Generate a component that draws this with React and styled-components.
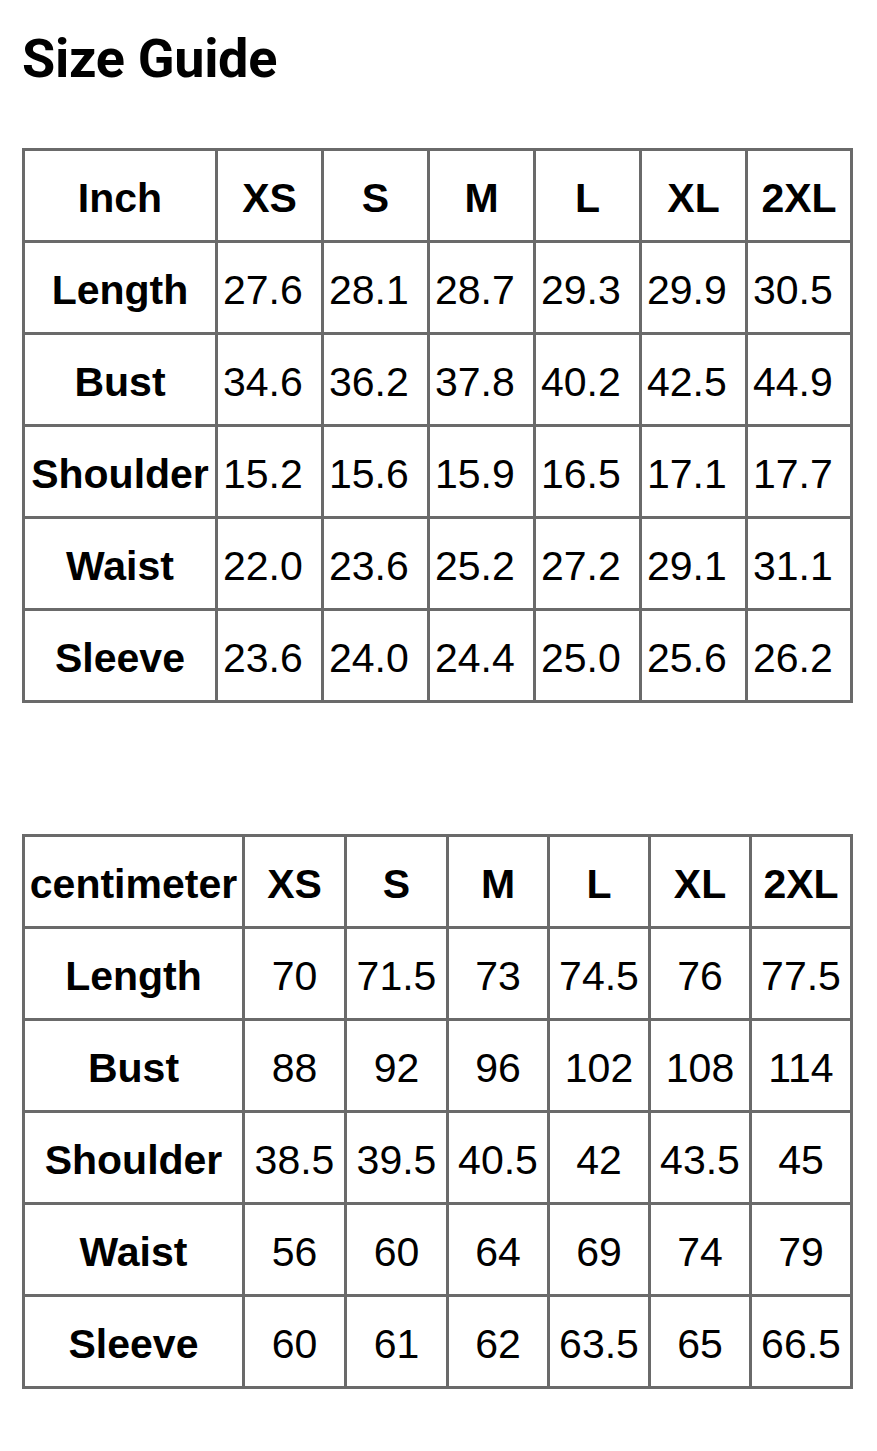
import React from 'react';
import styled, { createGlobalStyle } from 'styled-components';

const GlobalStyle = createGlobalStyle`
  body {
    margin: 0;
    background: #ffffff;
    color: #000000;
  }
`;

const Page = styled.div`
  padding: 0 0 40px 22px;
  width: 877px;
  box-sizing: border-box;
`;

const Title = styled.h1`
  margin: 0;
  padding-top: 27px;
  font-family: Roboto, "Liberation Sans", sans-serif;
  font-weight: 700;
  font-size: 54px;
  line-height: 64px;
  letter-spacing: -0.3px;
`;

const Table = styled.table`
  border-collapse: collapse;
  table-layout: fixed;
  width: 828px;
  margin-top: ${(p) => p.$top}px;
  font-family: "Liberation Sans", Arial, sans-serif;
  font-size: 41px;
`;

const Row = styled.tr`
  height: 92px;
`;

const Cell = styled.td`
  border: 3px solid #6a6a6a;
  padding: 6px 0 0 ${(p) => (p.$left ? 5 : 0)}px;
  text-align: ${(p) => (p.$left ? 'left' : 'center')};
  vertical-align: middle;
  font-weight: ${(p) => (p.$bold ? 700 : 400)};
  white-space: nowrap;
  overflow: visible;
  line-height: 1;
`;

const sizes = ['XS', 'S', 'M', 'L', 'XL', '2XL'];

const inchRows = [
  ['Length', '27.6', '28.1', '28.7', '29.3', '29.9', '30.5'],
  ['Bust', '34.6', '36.2', '37.8', '40.2', '42.5', '44.9'],
  ['Shoulder', '15.2', '15.6', '15.9', '16.5', '17.1', '17.7'],
  ['Waist', '22.0', '23.6', '25.2', '27.2', '29.1', '31.1'],
  ['Sleeve', '23.6', '24.0', '24.4', '25.0', '25.6', '26.2'],
];

const cmRows = [
  ['Length', '70', '71.5', '73', '74.5', '76', '77.5'],
  ['Bust', '88', '92', '96', '102', '108', '114'],
  ['Shoulder', '38.5', '39.5', '40.5', '42', '43.5', '45'],
  ['Waist', '56', '60', '64', '69', '74', '79'],
  ['Sleeve', '60', '61', '62', '63.5', '65', '66.5'],
];

const SizeTable = ({ unit, rows, cols, top, leftValues }) => (
  <Table $top={top}>
    <colgroup>
      {cols.map((w, i) => (
        <col key={i} style={{ width: w }} />
      ))}
    </colgroup>
    <tbody>
      <Row>
        <Cell $bold>{unit}</Cell>
        {sizes.map((s) => (
          <Cell key={s} $bold>{s}</Cell>
        ))}
      </Row>
      {rows.map(([label, ...vals]) => (
        <Row key={label}>
          <Cell $bold>{label}</Cell>
          {vals.map((v, i) => (
            <Cell key={i} $left={leftValues}>{v}</Cell>
          ))}
        </Row>
      ))}
    </tbody>
  </Table>
);

export default function App() {
  return (
    <>
      <GlobalStyle />
      <Page>
        <Title>Size Guide</Title>
        <SizeTable
          unit="Inch"
          rows={inchRows}
          cols={[193, 106, 106, 106, 106, 106, 105]}
          top={57}
          leftValues
        />
        <SizeTable
          unit="centimeter"
          rows={cmRows}
          cols={[220, 102, 102, 101, 101, 101, 101]}
          top={131}
        />
      </Page>
    </>
  );
}
